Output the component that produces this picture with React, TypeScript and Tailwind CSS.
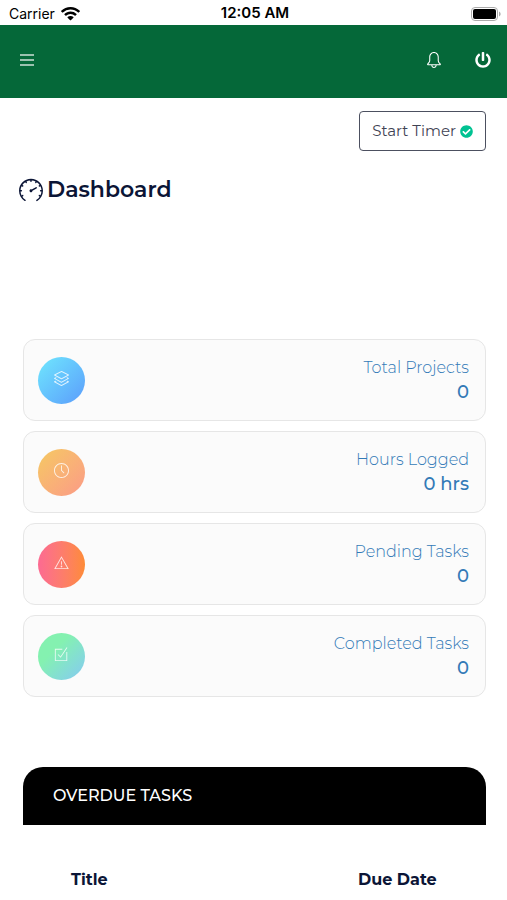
import type { ReactNode } from "react";
import { FaCheckCircle, FaPowerOff } from "react-icons/fa";
import { SlBell, SlClock, SlLayers, SlSpeedometer } from "react-icons/sl";
import { TfiAlert, TfiCheckBox } from "react-icons/tfi";

type Stat = {
  label: string;
  value: string;
  icon: ReactNode;
  gradient: string;
};

const stats: Stat[] = [
  {
    label: "Total Projects",
    value: "0",
    icon: <SlLayers />,
    gradient: "bg-linear-to-br from-[#70e7fd] to-[#5c9cfb]",
  },
  {
    label: "Hours Logged",
    value: "0 hrs",
    icon: <SlClock />,
    gradient: "bg-linear-to-br from-[#f5c960] to-[#fb9a86]",
  },
  {
    label: "Pending Tasks",
    value: "0",
    icon: <TfiAlert />,
    gradient: "bg-linear-to-r from-[#fc6a92] to-[#fe8b35]",
  },
  {
    label: "Completed Tasks",
    value: "0",
    icon: <TfiCheckBox />,
    gradient: "bg-linear-to-br from-[#84f1b0] from-35% to-[#86c8f2]",
  },
];

function StatusBar() {
  return (
    <div className="grid h-[25px] grid-cols-3 items-center pt-0.5 pr-1.5 pl-[9px] font-[Inter,sans-serif] text-black">
      <div className="flex items-center gap-1.5 text-sm">
        <span>Carrier</span>
        <svg viewBox="0 0 19 14" className="h-3.5 w-[19px]" fill="currentColor" aria-hidden="true">
          <path d="M9.5 0C5.9 0 2.6 1.4.2 3.8c-.2.2-.2.4 0 .6l1.1 1.1c.2.2.4.2.6 0A10.9 10.9 0 0 1 9.5 2.6c2.9 0 5.6 1.1 7.6 2.9.2.2.4.2.6 0l1.1-1.1c.2-.2.2-.4 0-.6A13.2 13.2 0 0 0 9.5 0z" />
          <path d="M9.5 4.500c-2.400 0-4.500.9-6.100 2.400-.2.2-.2.4 0 .6l1.200 1.200c.1.1.4.1.5 0a6.400 6.400 0 0 1 8.800 0c.1.1.4.1.5 0l1.200-1.200c.2-.2.2-.4 0-.6a8.800 8.800 0 0 0-6.100-2.400z" />
          <path d="M9.5 9c-1.100 0-2.100.4-2.900 1.100-.2.2-.2.4 0 .6l2.600 2.600c.2.2.4.2.6 0l2.600-2.600c.2-.2.2-.4 0-.6A4.300 4.300 0 0 0 9.500 9z" />
        </svg>
      </div>
      <div className="text-center text-[15px] font-semibold whitespace-nowrap">12:05 AM</div>
      <svg viewBox="0 0 30 14" className="h-3.5 w-[30px] justify-self-end" aria-hidden="true">
        <rect x="0.5" y="0.5" width="26" height="13" rx="3.5" fill="#fff" stroke="#aaa" />
        <rect x="2" y="2" width="23" height="10" rx="2" fill="#000" />
        <path d="M28 4.5c1 .4 1.600 1.400 1.600 2.500S29 9.100 28 9.500z" fill="#aaa" />
      </svg>
    </div>
  );
}

function StatCard({ label, value, icon, gradient }: Stat) {
  return (
    <a
      href="#"
      className="flex h-[82px] items-center justify-between rounded-xl border border-[#e6e6e6] bg-[#fbfbfb] pr-4 pl-3.5 text-[#337ab7]"
    >
      <span className={`flex size-[47px] items-center justify-center rounded-full pb-1 text-[15px] text-white/80 ${gradient}`}>
        {icon}
      </span>
      <span className="flex flex-col text-right">
        <span className="text-base leading-6 font-light">{label}</span>
        <span className="text-lg leading-6 font-medium">{value}</span>
      </span>
    </a>
  );
}

export default function App() {
  return (
    <div className="min-h-screen overflow-x-hidden bg-white font-[Montserrat,Inter,sans-serif] text-[#0b1536]">
      <StatusBar />

      <header className="flex h-[73px] items-center justify-between bg-[#056839] pr-4 pb-1 pl-5">
        <button type="button" aria-label="Menu" className="text-white/60">
          <svg viewBox="0 0 14 12" className="h-3 w-3.5" fill="currentColor" aria-hidden="true">
            <path d="M0 0h14v2H0zM0 5h14v2H0zM0 10h14v2H0z" />
          </svg>
        </button>
        <div className="flex items-center gap-[33px]">
          <button type="button" aria-label="Notifications" className="text-base text-white">
            <SlBell />
          </button>
          <button type="button" aria-label="Log out" className="text-base text-white">
            <FaPowerOff />
          </button>
        </div>
      </header>

      <main className="pt-[13px] pr-[21px] pl-[23px]">
        <div className="flex justify-end">
          <button
            type="button"
            className="flex h-10 items-center gap-1 rounded border border-[#4c5060] px-3 text-[15px] text-[#3f4354]"
          >
            Start Timer <FaCheckCircle className="size-[13px] text-[#00c292]" />
          </button>
        </div>

        <h1 className="-ml-1 mt-[21px] flex items-center gap-1 text-[22px] leading-9 font-semibold">
          <SlSpeedometer className="size-6" /> Dashboard
        </h1>

        <div className="mt-[131px] flex flex-col gap-2.5">
          {stats.map((stat) => (
            <StatCard key={stat.label} {...stat} />
          ))}
        </div>

        <section className="mt-[70px]">
          <h2 className="flex h-[58px] items-center rounded-t-[20px] bg-black px-[30px] text-base font-medium text-white uppercase">
            Overdue Tasks
          </h2>
          <table className="mt-[43px] w-full text-left text-base">
            <thead>
              <tr>
                <th className="pl-12 font-bold">Title</th>
                <th className="w-[128px] font-bold">Due Date</th>
              </tr>
            </thead>
          </table>
        </section>
      </main>
    </div>
  );
}
